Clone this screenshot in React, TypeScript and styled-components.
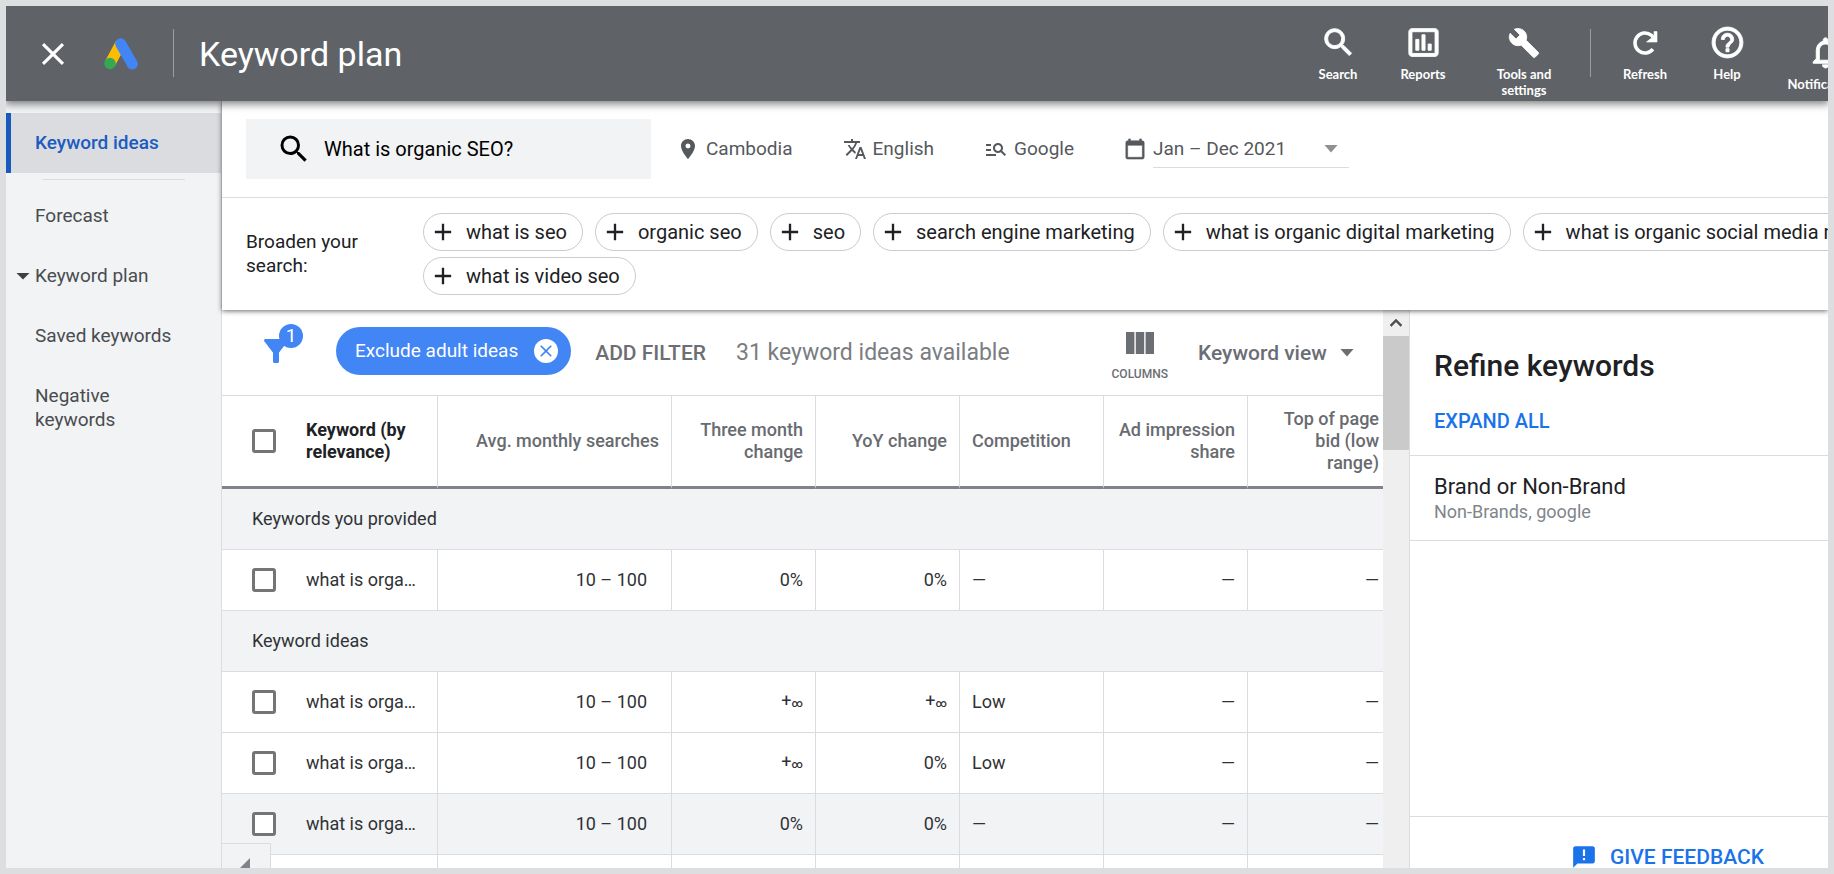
import React from 'react';
import styled, { createGlobalStyle, css } from 'styled-components';
import {
  MdAdd, MdAnnouncement, MdBuild, MdCalendarToday, MdClose, MdFilterAlt,
  MdHelpOutline, MdInsertChartOutlined, MdKeyboardArrowUp, MdManageSearch, MdNotificationsNone,
  MdRoom, MdSearch, MdTranslate,
} from 'react-icons/md';

const line = '#dadce0';

const GlobalStyle = createGlobalStyle`
  *, *::before, *::after { box-sizing: border-box; }
  body { margin: 0; font: 400 19px/24px Roboto, "Liberation Sans", sans-serif; color: #202124; background: #dddee0; }
  button, input, select { font: inherit; color: inherit; background: none; border: 0; margin: 0; padding: 0; }
  button, select { cursor: pointer; }
  svg { display: block; flex: none; }
`;

const boldIcon = css`
  svg path:not([fill='none']) {
    stroke: currentColor;
    stroke-width: 0.6px;
  }
  svg path[fill='none'] {
    stroke: none;
  }
`;

const Frame = styled.div`
  height: 100vh;
  padding: 6px;
  display: flex;
  flex-direction: column;
  overflow: hidden;
`;

const TopBar = styled.header`
  position: relative;
  z-index: 3;
  flex: none;
  height: 95px;
  display: flex;
  align-items: flex-start;
  padding-left: 28px;
  color: #fff;
  background: #5f6368;
  box-shadow: 0 2px 8px 1px rgba(0, 0, 0, 0.5);
  clip-path: inset(0 0 -20px 0);
`;

const BarButton = styled.button`
  height: 95px;
  display: flex;
  align-items: center;
`;

const LogoLink = styled.a`
  height: 95px;
  margin-left: 32px;
  display: flex;
  align-items: center;
`;

const BarDivider = styled.span<{ $left: number; $right: number }>`
  flex: none;
  width: 1px;
  height: 48px;
  margin: 23px ${p => p.$right}px 0 ${p => p.$left}px;
  background: #9a9da1;
`;

const Title = styled.h1`
  margin: 0;
  font: 400 34px/96px Roboto, sans-serif;
  white-space: nowrap;
`;

const Tools = styled.nav`
  display: flex;
  margin-left: auto;
  margin-right: -58px;
`;

const Tool = styled.button<{ $width: number; $top?: number }>`
  flex: none;
  width: ${p => p.$width}px;
  padding: ${p => p.$top ?? 18}px 12px 0;
  display: flex;
  flex-direction: column;
  align-items: center;
  gap: 5px;
  align-self: flex-start;
  font: 700 13px/16px Lato, sans-serif;
  ${boldIcon}
`;

const IconSlot = styled.span`
  height: 37px;
  display: grid;
  place-items: center;
`;

const Body = styled.div`
  flex: 1;
  min-height: 0;
  display: flex;
  overflow: hidden;
`;

const Sidebar = styled.nav`
  flex: none;
  width: 216px;
  padding-top: 12px;
  background: #f1f3f4;
  border-right: 1px solid ${line};
`;

const NavItem = styled.a<{ $active?: boolean }>`
  display: flex;
  align-items: center;
  padding: 18px 40px 18px 29px;
  color: #494c50;
  text-decoration: none;
  ${p => p.$active && css`
    padding-left: 24px;
    border-left: 5px solid #185abc;
    background: #dadce0;
    color: #1c5bc0;
    font-weight: 500;
  `}
`;

const Caret = styled.span`
  width: 14px;
  height: 7px;
  margin: 0 5px 0 -19px;
  background: #3c4043;
  clip-path: polygon(0 0, 100% 0, 50% 100%);
`;

const NavRule = styled.hr`
  height: 1px;
  margin: 6px 36px;
  border: 0;
  background: ${line};
`;

const Main = styled.main`
  flex: 1;
  min-width: 0;
  display: flex;
  flex-direction: column;
  background: #fff;
`;

const SearchPanel = styled.section`
  position: relative;
  z-index: 2;
  flex: none;
  background: #fff;
  box-shadow: 0 1px 5px rgba(0, 0, 0, 0.6);
`;

const Criteria = styled.div`
  display: flex;
  align-items: center;
  height: 97px;
  padding: 0 24px;
  border-bottom: 1px solid ${line};
`;

const SearchBox = styled.label`
  display: flex;
  align-items: center;
  gap: 12px;
  width: 405px;
  height: 60px;
  margin-right: 25px;
  padding-left: 30px;
  background: #f1f3f4;
  color: #000;
  font-size: 20px;
`;

const SearchInput = styled.input`
  flex: 1;
  min-width: 0;
  outline: 0;
`;

const Criterion = styled.button`
  display: flex;
  align-items: center;
  gap: 6px;
  margin-right: 50px;
  color: #55585c;
`;

const DateField = styled.label`
  display: flex;
  align-items: center;
  gap: 7px;
  color: #55585c;
  ${boldIcon}
`;

const SelectWrap = styled.span<{ $underline?: boolean }>`
  position: relative;
  display: flex;
  ${p => p.$underline && css`border-bottom: 1px solid ${line};`}
`;

const Select = styled.select<{ $width: number }>`
  appearance: none;
  width: ${p => p.$width}px;
  height: 36px;
  outline: 0;
`;

const SelectArrow = styled.span<{ $right: number; $color?: string }>`
  position: absolute;
  right: ${p => p.$right}px;
  top: 14px;
  width: 14px;
  height: 8px;
  background: ${p => p.$color ?? 'currentColor'};
  clip-path: polygon(0 0, 100% 0, 50% 100%);
  pointer-events: none;
`;

const Broaden = styled.div`
  display: flex;
  align-items: center;
  height: 112px;
  padding-left: 24px;
  overflow: hidden;
`;

const BroadenLabel = styled.p`
  flex: none;
  width: 130px;
  margin: 0 47px 0 0;
`;

const ChipRows = styled.div`
  display: grid;
  gap: 6px;
`;

const ChipRow = styled.div`
  display: flex;
  gap: 12px;
`;

const IdeaChip = styled.button`
  flex: none;
  display: flex;
  align-items: center;
  gap: 9px;
  height: 38px;
  padding: 0 15px 0 5px;
  border: 1px solid #c9cbcf;
  border-radius: 19px;
  font-size: 20px;
  white-space: nowrap;
`;

const Workspace = styled.div`
  flex: 1;
  min-height: 0;
  display: flex;
`;

const Results = styled.section`
  position: relative;
  flex: 1;
  min-width: 0;
  overflow: hidden;
`;

const FilterBar = styled.div`
  display: flex;
  align-items: center;
  height: 86px;
  padding-left: 36px;
  padding-right: 24px;
  border-bottom: 1px solid ${line};
  color: #6b6e73;
  white-space: nowrap;
`;

const FilterButton = styled.button`
  position: relative;
  width: 78px;
  padding-bottom: 4px;
  color: #4285f4;
`;

const Badge = styled.span`
  position: absolute;
  left: 21px;
  top: -9px;
  width: 24px;
  height: 24px;
  border-radius: 50%;
  background: #4285f4;
  color: #fff;
  font-size: 19px;
`;

const FilterChip = styled.div`
  display: flex;
  align-items: center;
  gap: 16px;
  height: 48px;
  margin: -4px 24px 0 0;
  padding: 0 13px 0 19px;
  border-radius: 24px;
  background: #4285f4;
  color: #fff;
`;

const RemoveButton = styled.button`
  width: 24px;
  height: 24px;
  display: grid;
  place-items: center;
  border-radius: 50%;
  background: #fff;
  color: #4285f4;
`;

const AddFilter = styled.button`
  margin-right: 30px;
  font-size: 21px;
  font-weight: 500;
`;

const Count = styled.span`
  font-size: 23px;
  color: #7a7d81;
`;

const ColumnsButton = styled.button`
  margin-left: auto;
  margin-right: 30px;
  padding-top: 8px;
  display: grid;
  justify-items: center;
  gap: 12px;
  font: 500 12px/16px Roboto, sans-serif;
`;

const ViewField = styled.label`
  font-size: 21px;
  font-weight: 500;
`;

const Table = styled.table`
  width: calc(100% + 9px);
  table-layout: fixed;
  border-collapse: separate;
  border-spacing: 0;
  font-size: 18px;
`;

const HeadCell = styled.th<{ $align?: string; $strong?: boolean }>`
  height: 93px;
  padding: 0 12px 0 ${p => (p.$strong ? 0 : 12)}px;
  border-bottom: 3px solid #80838a;
  border-right: 1px solid ${line};
  font: 500 18px/22px Roboto, sans-serif;
  ${p => p.$strong && 'font-weight: 700;'}
  color: ${p => (p.$strong ? '#202124' : '#686b70')};
  text-align: ${p => p.$align ?? 'right'};
`;

const TickHead = styled(HeadCell)`
  padding-left: 30px;
  border-right: 0;
`;

const SectionCell = styled.th`
  height: 61px;
  padding: 0 30px;
  border-bottom: 1px solid ${line};
  background: #f1f3f4;
  color: #303236;
  font-weight: 400;
  text-align: left;
`;

const Row = styled.tr<{ $shaded?: boolean }>`
  background: ${p => (p.$shaded ? '#f1f3f4' : '#fff')};
`;

const Cell = styled.td<{ $align?: string; $right?: number; $left?: number }>`
  height: 61px;
  padding: 0 ${p => p.$right ?? 12}px 0 ${p => p.$left ?? 12}px;
  border-bottom: 1px solid ${line};
  border-right: 1px solid ${line};
  color: #303236;
  text-align: ${p => p.$align ?? 'right'};
  white-space: nowrap;
  overflow: hidden;
  text-overflow: ellipsis;
`;

const TickCell = styled(Cell)`
  padding: 0 0 0 30px;
  border-right: 0;
`;

const Tick = styled.input`
  appearance: none;
  display: block;
  width: 24px;
  height: 24px;
  border: 3px solid #757575;
  border-radius: 3px;
  background: #fff;
`;

const Infinity = styled.span`
  font-size: 11px;
  font-weight: 500;
`;

const CollapseTab = styled.button`
  position: absolute;
  left: 0;
  bottom: 0;
  width: 49px;
  height: 25px;
  padding: 14px 0 0 18px;
  border-top: 1px solid ${line};
  border-right: 1px solid ${line};
  background: #f1f3f4;
`;

const TabCorner = styled.span`
  display: block;
  width: 10px;
  height: 10px;
  background: #80838a;
  clip-path: polygon(100% 0, 100% 100%, 0 100%);
`;

const ScrollTrack = styled.div`
  flex: none;
  width: 26px;
  background: #efefef;
`;

const ScrollUp = styled.button`
  width: 26px;
  height: 26px;
  display: grid;
  place-items: center;
  color: #505050;
  ${boldIcon}
`;

const ScrollThumb = styled.div`
  height: 114px;
  background: #cacaca;
`;

const Refine = styled.aside`
  flex: none;
  width: 419px;
  display: flex;
  flex-direction: column;
  border-left: 1px solid ${line};
`;

const RefineHead = styled.div`
  padding: 38px 24px 22px;
  border-bottom: 1px solid ${line};
`;

const RefineTitle = styled.h2`
  margin: 0 0 25px;
  font: 500 30px/36px Roboto, sans-serif;
`;

const TextButton = styled.button`
  display: flex;
  align-items: center;
  gap: 13px;
  font-weight: 500;
  font-size: 20px;
  color: #1a73e8;
`;

const FeedbackButton = styled(TextButton)`
  font-size: 21px;
`;

const RefineGroup = styled.div`
  padding: 18px 24px 16px;
  border-bottom: 1px solid ${line};
`;

const GroupName = styled.h3`
  margin: 0;
  font: 400 22px/26px Roboto, sans-serif;
`;

const GroupHint = styled.p`
  margin: 0;
  color: #80868b;
  font-size: 18px;
`;

const Feedback = styled.div`
  margin-top: auto;
  height: 52px;
  padding: 27px 0 0 161px;
  border-top: 1px solid ${line};
  overflow: hidden;
`;

const AdsLogo = () => (
  <svg width="34" height="34" viewBox="0 0 34 34" aria-hidden="true">
    <path d="M16.700 6.700 6 26.500" stroke="#fbbc04" strokeWidth="11" />
    <path d="M16.700 6.700 28.300 27" stroke="#4285f4" strokeWidth="11" strokeLinecap="round" />
    <circle cx="6" cy="26.500" r="5.700" fill="#34a853" />
  </svg>
);

const RefreshIcon = () => (
  <svg width="28" height="28" viewBox="0 0 28 28" aria-hidden="true">
    <circle cx="14" cy="14" r="10" fill="none" stroke="currentColor" strokeWidth="3.500" strokeDasharray="51 12" transform="rotate(38 14 14)" />
    <path d="M26 2.500v10.500H15.500l4-3.200 3.500-1V2.500z" fill="currentColor" />
  </svg>
);

const ColumnsIcon = () => (
  <svg width="28" height="22" viewBox="0 0 28 22" fill="currentColor" aria-hidden="true">
    <path d="M0 0h8.400v22H0zM9.800 0h8.400v22H9.800zM19.600 0H28v22h-8.400z" />
  </svg>
);

const chips = [
  ['what is seo', 'organic seo', 'seo', 'search engine marketing', 'what is organic digital marketing', 'what is organic social media marketing'],
  ['what is video seo'],
];

const headings = [
  { text: 'Avg. monthly searches' },
  { text: 'Three month change' },
  { text: 'YoY change' },
  { text: 'Competition', align: 'left' },
  { text: 'Ad impression share' },
  { text: 'Top of page bid (low range)' },
];

type Keyword = { searches: string; three: string; yoy: string; competition: string; shaded?: boolean };

const provided: Keyword[] = [{ searches: '10 – 100', three: '0%', yoy: '0%', competition: '—' }];
const ideas: Keyword[] = [
  { searches: '10 – 100', three: '+∞', yoy: '+∞', competition: 'Low' },
  { searches: '10 – 100', three: '+∞', yoy: '0%', competition: 'Low' },
  { searches: '10 – 100', three: '0%', yoy: '0%', competition: '—', shaded: true },
  { searches: '10 – 100', three: '0%', yoy: '0%', competition: '—' },
];

const Change = ({ value }: { value: string }) =>
  value === '+∞' ? <>+<Infinity>∞</Infinity></> : <>{value}</>;

const KeywordRow = ({ item }: { item: Keyword }) => (
  <Row $shaded={item.shaded}>
    <TickCell><Tick type="checkbox" aria-label="Select keyword" /></TickCell>
    <Cell $align="left" $left={0}>what is organic seo</Cell>
    <Cell $right={24}>{item.searches}</Cell>
    <Cell><Change value={item.three} /></Cell>
    <Cell><Change value={item.yoy} /></Cell>
    <Cell $align="left">{item.competition}</Cell>
    <Cell>—</Cell>
    <Cell>—</Cell>
  </Row>
);

export default function App() {
  return (
    <Frame>
      <GlobalStyle />
      <TopBar>
        <BarButton aria-label="Close"><MdClose size={38} /></BarButton>
        <LogoLink href="#" aria-label="Google Ads"><AdsLogo /></LogoLink>
        <BarDivider $left={35} $right={25} />
        <Title>Keyword plan</Title>
        <Tools>
          <Tool $width={78}><MdSearch size={37} />Search</Tool>
          <Tool $width={92}><MdInsertChartOutlined size={37} />Reports</Tool>
          <Tool $width={110}><IconSlot><MdBuild size={32} /></IconSlot>Tools and settings</Tool>
          <BarDivider $left={11} $right={9} />
          <Tool $width={90}><IconSlot><RefreshIcon /></IconSlot>Refresh</Tool>
          <Tool $width={74}><MdHelpOutline size={37} />Help</Tool>
          <Tool $width={122} $top={28}><MdNotificationsNone size={37} />Notifications</Tool>
        </Tools>
      </TopBar>
      <Body>
        <Sidebar>
          <NavItem href="#" $active>Keyword ideas</NavItem>
          <NavRule />
          <NavItem href="#">Forecast</NavItem>
          <NavItem href="#"><Caret />Keyword plan</NavItem>
          <NavItem href="#">Saved keywords</NavItem>
          <NavItem href="#">Negative keywords</NavItem>
        </Sidebar>
        <Main>
          <SearchPanel>
            <Criteria>
              <SearchBox>
                <MdSearch size={36} />
                <SearchInput aria-label="Search keywords" defaultValue="What is organic SEO?" />
              </SearchBox>
              <Criterion><MdRoom size={24} />Cambodia</Criterion>
              <Criterion><MdTranslate size={24} />English</Criterion>
              <Criterion><MdManageSearch size={24} />Google</Criterion>
              <DateField>
                <MdCalendarToday size={22} />
                <SelectWrap $underline>
                  <Select $width={196} aria-label="Date range"><option>Jan – Dec 2021</option></Select>
                  <SelectArrow $right={11} $color="#8e9094" />
                </SelectWrap>
              </DateField>
            </Criteria>
            <Broaden>
              <BroadenLabel>Broaden your search:</BroadenLabel>
              <ChipRows>
                {chips.map((row, i) => (
                  <ChipRow key={i}>
                    {row.map(text => <IdeaChip key={text}><MdAdd size={28} />{text}</IdeaChip>)}
                  </ChipRow>
                ))}
              </ChipRows>
            </Broaden>
          </SearchPanel>
          <Workspace>
            <Results>
              <FilterBar>
                <FilterButton aria-label="Filters"><MdFilterAlt size={36} /><Badge>1</Badge></FilterButton>
                <FilterChip>
                  Exclude adult ideas
                  <RemoveButton aria-label="Remove filter"><MdClose size={20} /></RemoveButton>
                </FilterChip>
                <AddFilter>ADD FILTER</AddFilter>
                <Count>31 keyword ideas available</Count>
                <ColumnsButton><ColumnsIcon />COLUMNS</ColumnsButton>
                <ViewField>
                  <SelectWrap>
                    <Select $width={161} aria-label="View"><option>Keyword view</option></Select>
                    <SelectArrow $right={5} />
                  </SelectWrap>
                </ViewField>
              </FilterBar>
              <Table>
                <colgroup>
                  <col style={{ width: 84 }} />
                  <col style={{ width: 132 }} />
                  <col />
                  <col style={{ width: 144 }} />
                  <col style={{ width: 144 }} />
                  <col style={{ width: 144 }} />
                  <col style={{ width: 144 }} />
                  <col style={{ width: 144 }} />
                </colgroup>
                <thead>
                  <tr>
                    <TickHead><Tick type="checkbox" aria-label="Select all keywords" /></TickHead>
                    <HeadCell $align="left" $strong>Keyword (by relevance)</HeadCell>
                    {headings.map(h => <HeadCell key={h.text} $align={h.align}>{h.text}</HeadCell>)}
                  </tr>
                </thead>
                <tbody>
                  <tr><SectionCell colSpan={8}>Keywords you provided</SectionCell></tr>
                  {provided.map((item, i) => <KeywordRow key={i} item={item} />)}
                  <tr><SectionCell colSpan={8}>Keyword ideas</SectionCell></tr>
                  {ideas.map((item, i) => <KeywordRow key={i} item={item} />)}
                </tbody>
              </Table>
              <CollapseTab aria-label="Collapse navigation"><TabCorner /></CollapseTab>
            </Results>
            <ScrollTrack>
              <ScrollUp aria-label="Scroll up"><MdKeyboardArrowUp size={24} /></ScrollUp>
              <ScrollThumb />
            </ScrollTrack>
            <Refine>
              <RefineHead>
                <RefineTitle>Refine keywords</RefineTitle>
                <TextButton>EXPAND ALL</TextButton>
              </RefineHead>
              <RefineGroup>
                <GroupName>Brand or Non-Brand</GroupName>
                <GroupHint>Non-Brands, google</GroupHint>
              </RefineGroup>
              <Feedback>
                <FeedbackButton><MdAnnouncement size={26} />GIVE FEEDBACK</FeedbackButton>
              </Feedback>
            </Refine>
          </Workspace>
        </Main>
      </Body>
    </Frame>
  );
}
